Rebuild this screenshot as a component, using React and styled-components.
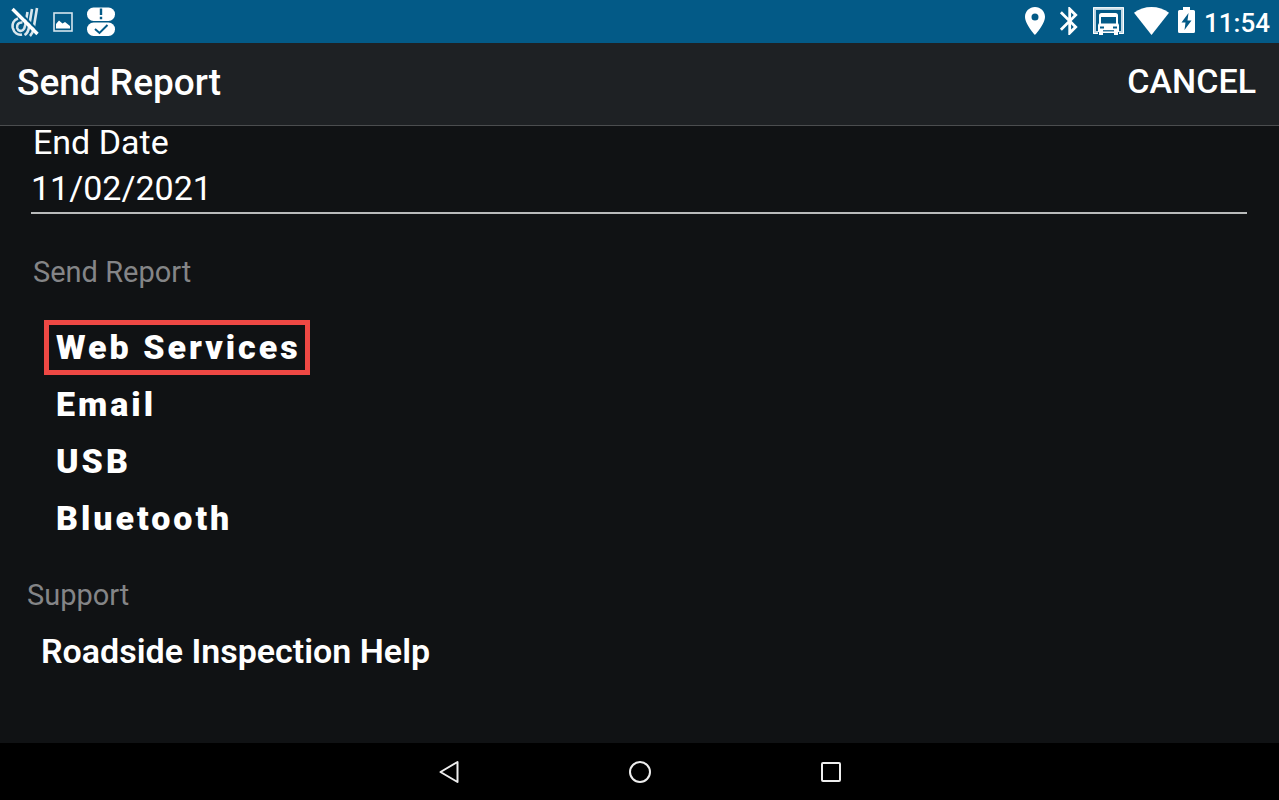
import React from "react";
import styled, { createGlobalStyle } from "styled-components";

const GlobalStyle = createGlobalStyle`
    * {
        box-sizing: border-box;
    }

    body {
        margin: 0;
        background: #101214;
        color: #ffffff;
        font-family: Roboto, "Liberation Sans", sans-serif;
    }

    button, input {
        font-family: inherit;
        color: inherit;
    }
`;

const Screen = styled.div`
    display: flex;
    flex-direction: column;
    min-height: 100vh;
`;

const StatusBar = styled.div`
    display: flex;
    justify-content: space-between;
    height: 43px;
    padding: 0 9px 0 11px;
    background: #035a87;
`;

const StatusGroup = styled.div`
    display: flex;
    align-items: center;
    gap: ${(props) => props.$gap}px;

    svg {
        display: block;
    }
`;

const SystemIcons = styled(StatusGroup)`
    padding-bottom: 2px;
`;

const Clock = styled.time`
    font-size: 26px;
    line-height: 32px;
    font-weight: 500;
    padding-top: 4px;
`;

const Header = styled.header`
    display: flex;
    align-items: center;
    justify-content: space-between;
    height: 83px;
    padding: 0 23px 4px 17px;
    background: #1e2124;
    border-bottom: 1px solid #4b4d4f;
`;

const Title = styled.h1`
    margin: 0;
    padding-top: 2px;
    font-size: 37px;
    line-height: 40px;
    font-weight: 500;
`;

const CancelButton = styled.button`
    padding: 0 0 2px;
    border: 0;
    background: none;
    font-size: 34px;
    line-height: 40px;
    font-weight: 500;
`;

const Content = styled.main`
    flex: 1;
    padding: 0 32px 32px 27px;
`;

const Field = styled.div`
    display: flex;
    flex-direction: column;
    margin-left: 4px;
`;

const FieldLabel = styled.label`
    padding-left: 2px;
    font-size: 34px;
    line-height: 32px;
`;

const DateInput = styled.input`
    width: 100%;
    height: 56px;
    padding: 6px 0 0;
    border: 0;
    border-bottom: 2px solid #b9bbbb;
    border-radius: 0;
    background: none;
    outline: none;
    font-size: 34px;
`;

const Section = styled.section`
    padding-left: ${(props) => props.$indent || 0}px;
    margin-top: ${(props) => props.$top}px;
`;

const SectionTitle = styled.h2`
    margin: 0;
    font-size: 29px;
    line-height: 32px;
    font-weight: 400;
    color: #848587;
`;

const Options = styled.div`
    display: flex;
    flex-direction: column;
    align-items: flex-start;
    gap: 2px;
    margin: 32px 0 0 11px;
`;

const OptionButton = styled.button`
    height: 55px;
    padding: 0 4px 2px 7px;
    border: 5px solid ${(props) => (props.$selected ? "#ee4844" : "transparent")};
    background: none;
    font-size: 34px;
    line-height: 40px;
    font-weight: 900;
    letter-spacing: 3px;
`;

const HelpLink = styled.a`
    display: inline-block;
    margin: 20px 0 0 14px;
    font-size: 34px;
    line-height: 40px;
    font-weight: 600;
    color: inherit;
    text-decoration: none;
`;

const NavBar = styled.nav`
    display: flex;
    justify-content: center;
    align-items: center;
    gap: 143px;
    height: 57px;
    background: #000000;
`;

const NavButton = styled.button`
    display: flex;
    justify-content: center;
    align-items: center;
    width: 48px;
    height: 48px;
    padding: 0;
    border: 0;
    background: none;
`;

const MutedIcon = () => (
    <svg width="28" height="30" viewBox="0 0 28 30" fill="none" stroke="#fff">
        <g strokeWidth="2.600" opacity="0.85">
            <path d="M7 11.500C2.500 13 1 17 1.800 21C3 26 7 28.500 11 27.500" />
            <path d="M11.500 15.500C7.500 15 5.500 18 6.200 21C7 24 10 24.500 12 23C13.500 22 13.800 20 14.200 18L16.500 5" />
            <path d="M21 2L18 20C17.500 24 16 26.500 13.500 28" />
            <path d="M26 1L22.500 22C22 25 21 27 19 29" />
        </g>
        <path d="M3.500 0L29 25.500" stroke="#035a87" strokeWidth="2" />
        <path d="M1.500 2L26.500 27" strokeWidth="3.400" />
    </svg>
);

const PictureIcon = () => (
    <svg width="20" height="20" viewBox="0 0 20 20">
        <rect x="1" y="1" width="18" height="18" fill="none" stroke="#d6e5ee" strokeWidth="1.600" />
        <path d="M3 16.500V12L6 8.500L9.500 11.500L12 10L17 14V16.500Z" fill="#fff" />
    </svg>
);

const AlertPillsIcon = () => (
    <svg width="28" height="30" viewBox="0 0 28 30">
        <rect y="0.500" width="28" height="13.500" rx="6.500" fill="#fff" />
        <rect y="15.500" width="28" height="13.500" rx="6.500" fill="#fff" />
        <path d="M14 1.500V8M14 9.800V12.300" stroke="#035a87" strokeWidth="2.400" />
        <path d="M8 22L12.500 26L20.500 18" fill="none" stroke="#035a87" strokeWidth="2" />
    </svg>
);

const PinIcon = () => (
    <svg width="26" height="28" viewBox="0 0 26 28">
        <path
            fill="#fff"
            fillRule="evenodd"
            d="M13 0C7.500 0 3 4.400 3 9.800C3 17.200 13 28 13 28C13 28 23 17.200 23 9.800C23 4.400 18.500 0 13 0ZM13 6.400A3.500 3.500 0 1 1 13 13.400A3.500 3.500 0 1 1 13 6.400Z"
        />
    </svg>
);

const BluetoothIcon = () => (
    <svg width="26" height="28" viewBox="-1.300 2 18.600 20">
        <path
            transform="translate(-3.500 0)"
            fill="#fff"
            d="M17.710 7.710L12 2h-1v7.590L6.410 5 5 6.410 10.590 12 5 17.590 6.410 19 11 14.410V22h1l5.710-5.710-4.300-4.290 4.300-4.290zM13 5.830l1.880 1.880L13 9.590V5.830zm1.880 10.460L13 18.170v-3.760l1.880 1.880z"
        />
    </svg>
);

const TruckIcon = () => (
    <svg width="36" height="28" viewBox="0 0 36 28" fill="none">
        <path d="M8 25.500H4.500V1.500H32.500V25.500H29" stroke="#bdd6e3" strokeWidth="3" />
        <path d="M8 26.500H3.500V0.800H33.500V26.500H29" stroke="#fff" strokeWidth="1" />
        <path
            fill="#fff"
            fillRule="evenodd"
            d="M11.500 6H25.500Q28 6 28 8.500V16L29 18V25H28V28H24V26H13V28H9V25H8V18L9 16V8.500Q9 6 11.500 6ZM11 10V16.500H26V10Z"
        />
        <path d="M10 20.500H14M23 20.500H27" stroke="#035a87" strokeWidth="1.800" />
        <path d="M13 23.800H24" stroke="#035a87" strokeWidth="1.200" />
    </svg>
);

const WifiIcon = () => (
    <svg width="35" height="28" viewBox="0 0 35 28">
        <path d="M17.500 28L0 5.800C5 2 11 0 17.500 0S30 2 35 5.800Z" fill="#fff" />
    </svg>
);

const BatteryIcon = () => (
    <svg width="19" height="28" viewBox="0 0 19 28">
        <path d="M6 0H13V3H16.500Q18 3 18 4.500V24.500Q18 26 16.500 26H2.500Q1 26 1 24.500V4.500Q1 3 2.500 3H6Z" fill="#fff" />
        <path d="M11.500 6L4.500 15.500H8.500L7.500 23L14.500 13.500H10.500Z" fill="#035a87" />
    </svg>
);

const BackIcon = () => (
    <svg width="22" height="24" viewBox="0 0 22 24">
        <path d="M19.500 2V22L2.500 12Z" fill="none" stroke="#eee" strokeWidth="2" strokeLinejoin="round" />
    </svg>
);

const HomeIcon = () => (
    <svg width="24" height="24" viewBox="0 0 24 24">
        <circle cx="12" cy="12" r="10" fill="none" stroke="#eee" strokeWidth="2" />
    </svg>
);

const RecentIcon = () => (
    <svg width="22" height="22" viewBox="0 0 22 22">
        <rect x="2" y="2" width="18" height="18" rx="1" fill="none" stroke="#eee" strokeWidth="2" />
    </svg>
);

const options = ["Web Services", "Email", "USB", "Bluetooth"];

const App = () => {
    return (
        <Screen>
            <GlobalStyle />
            <StatusBar>
                <StatusGroup $gap={14}>
                    <MutedIcon />
                    <PictureIcon />
                    <AlertPillsIcon />
                </StatusGroup>
                <SystemIcons $gap={8}>
                    <PinIcon />
                    <BluetoothIcon />
                    <TruckIcon />
                    <WifiIcon />
                    <BatteryIcon />
                    <Clock>11:54</Clock>
                </SystemIcons>
            </StatusBar>
            <Header>
                <Title>Send Report</Title>
                <CancelButton type="button">CANCEL</CancelButton>
            </Header>
            <Content>
                <Field>
                    <FieldLabel htmlFor="endDate">End Date</FieldLabel>
                    <DateInput id="endDate" type="text" defaultValue="11/02/2021" />
                </Field>
                <Section $top={42} $indent={6}>
                    <SectionTitle>Send Report</SectionTitle>
                    <Options>
                        {options.map((name) => (
                            <OptionButton key={name} type="button" $selected={name === "Web Services"}>
                                {name}
                            </OptionButton>
                        ))}
                    </Options>
                </Section>
                <Section $top={33}>
                    <SectionTitle>Support</SectionTitle>
                    <HelpLink href="#help">Roadside Inspection Help</HelpLink>
                </Section>
            </Content>
            <NavBar>
                <NavButton type="button" aria-label="Back"><BackIcon /></NavButton>
                <NavButton type="button" aria-label="Home"><HomeIcon /></NavButton>
                <NavButton type="button" aria-label="Recent apps"><RecentIcon /></NavButton>
            </NavBar>
        </Screen>
    );
}

export default App;
